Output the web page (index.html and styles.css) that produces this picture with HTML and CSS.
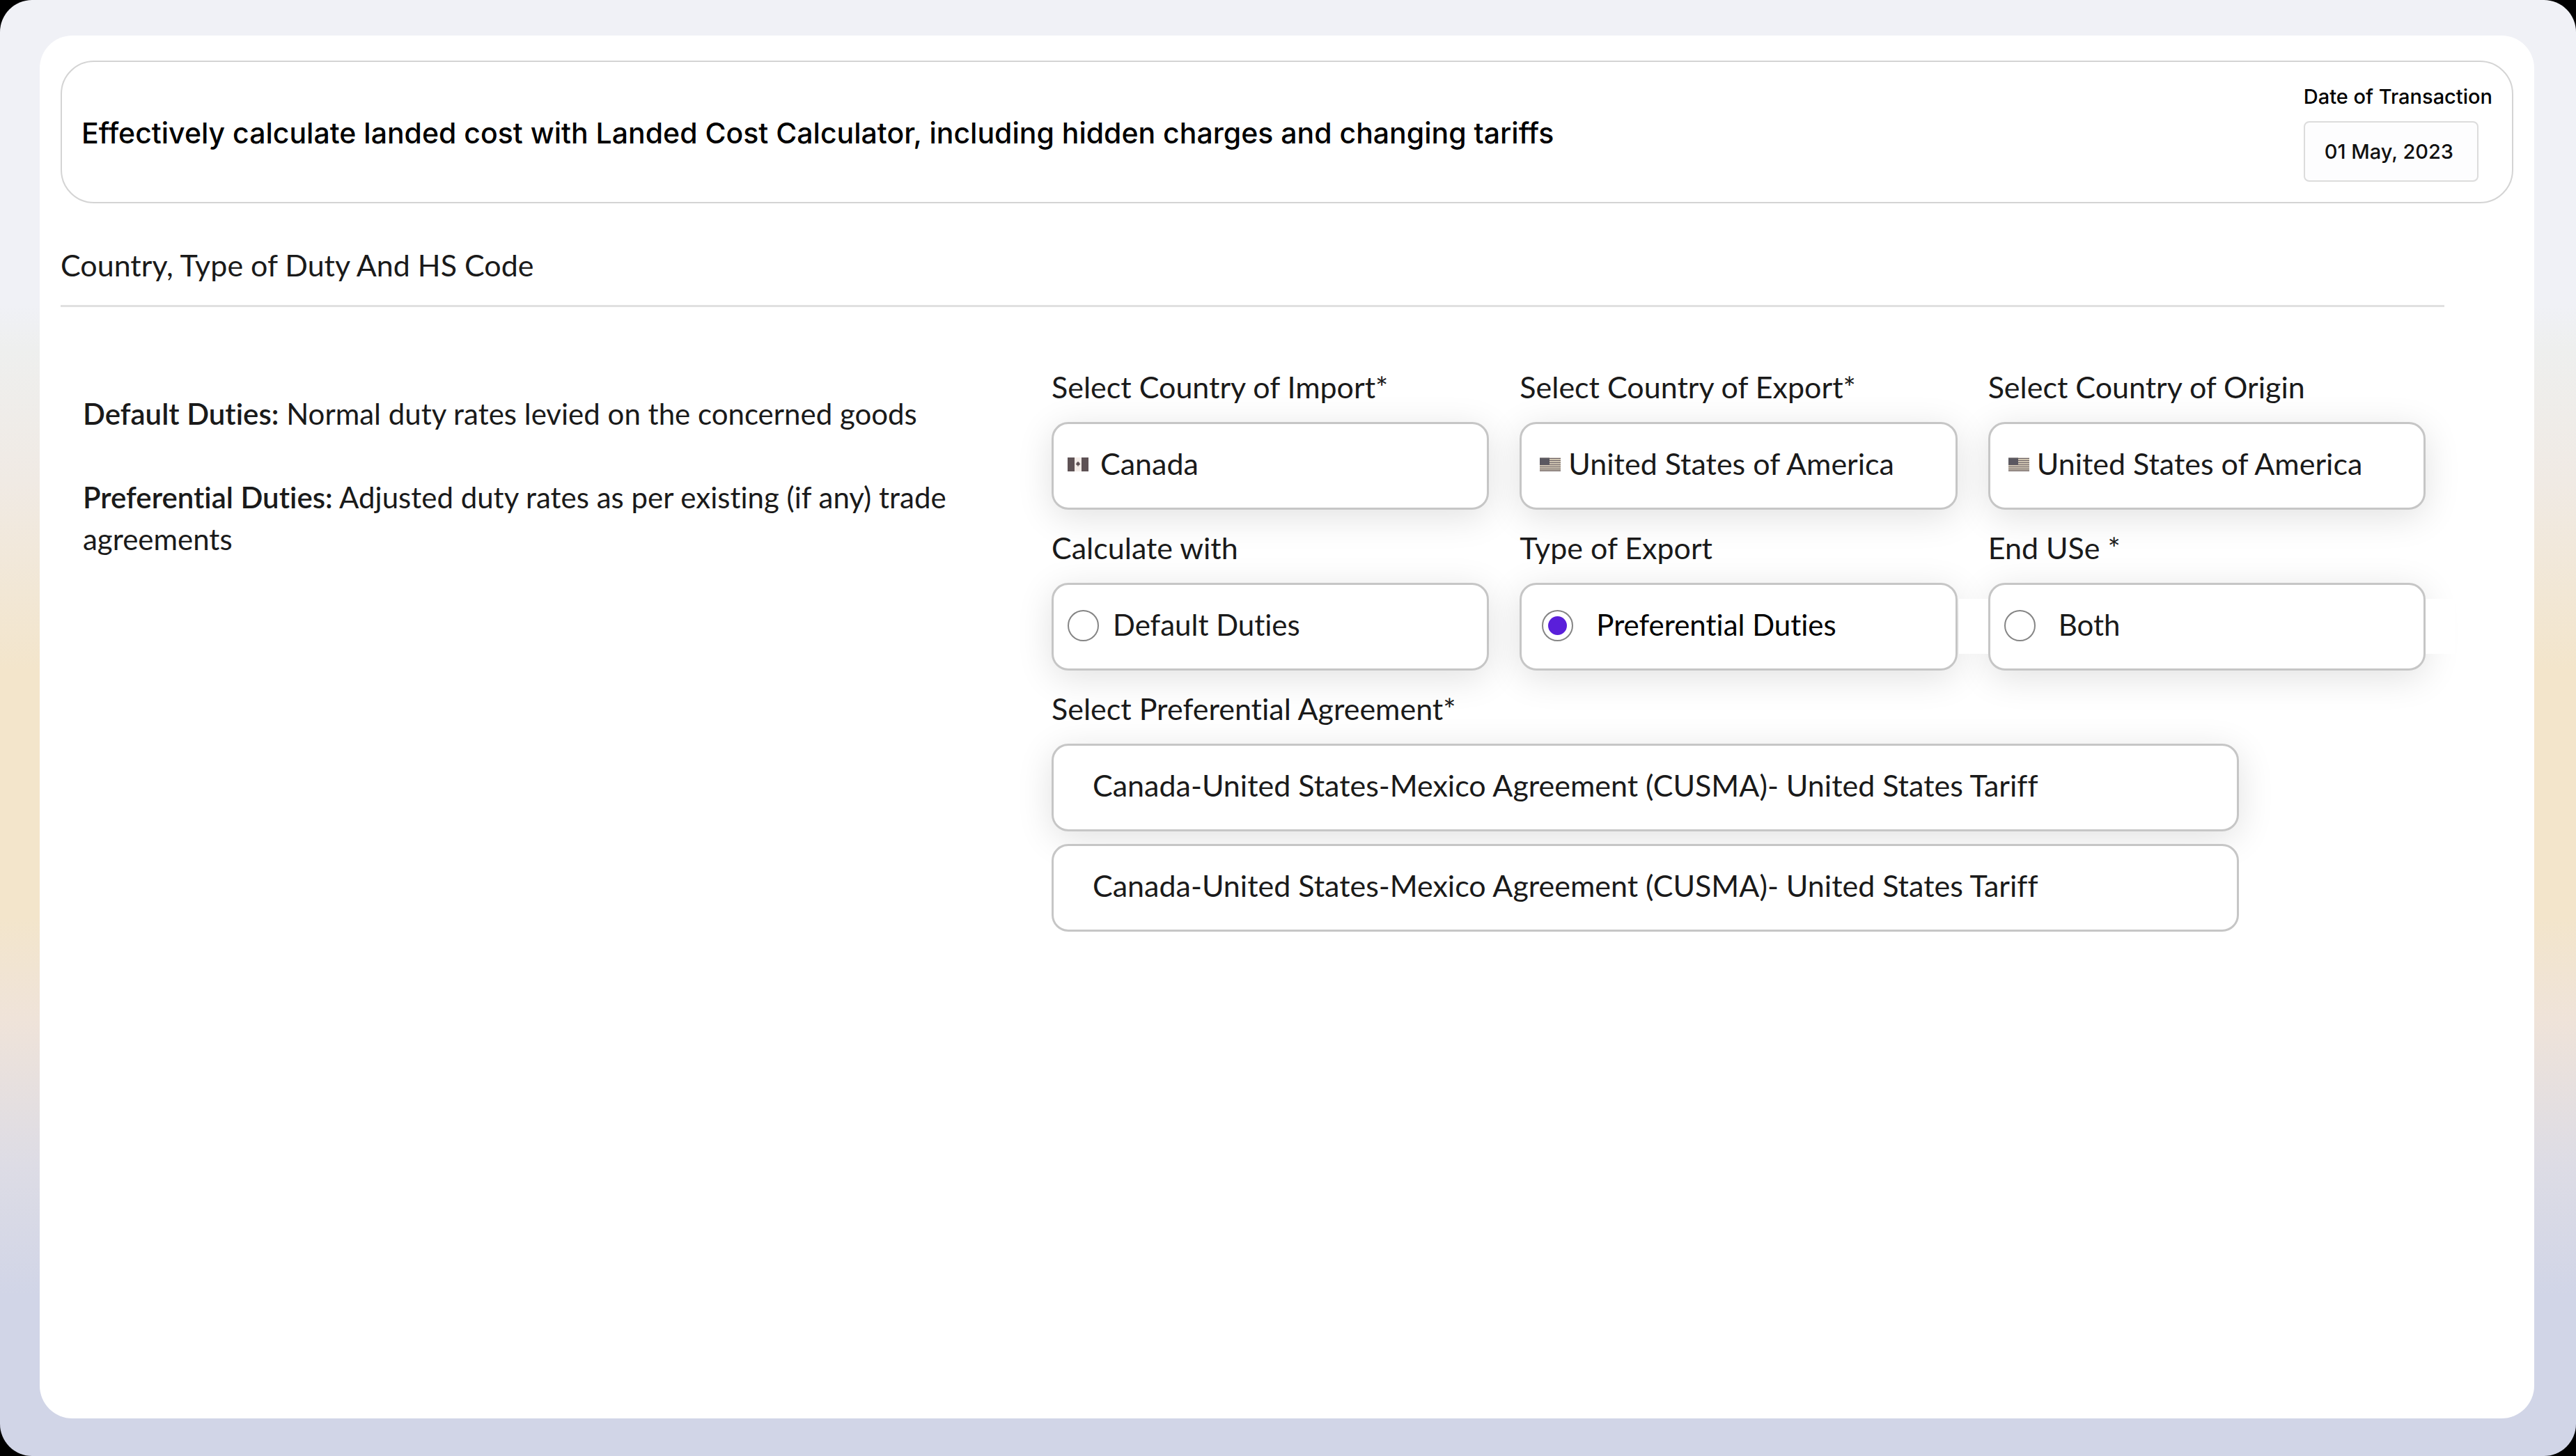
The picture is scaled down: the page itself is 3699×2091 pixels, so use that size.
FILE: index.html
```html
<!DOCTYPE html>
<html lang="en">
<head>
<meta charset="utf-8">
<meta name="viewport" content="width=device-width, initial-scale=1">
<title>Landed Cost Calculator</title>
<link rel="stylesheet" href="styles.css">
</head>
<body>
<svg class="sprite" aria-hidden="true">
  <symbol id="flag-ca" viewBox="0 0 30 20">
    <rect width="30" height="20" fill="#f3ece8"/>
    <rect width="10" height="20" fill="#5e5255"/>
    <rect x="20" width="10" height="20" fill="#5e5255"/>
    <path d="M15 5.5l1.2 1.8 1-.4-.2 1.500 1.400.7-1.800 2.200-1.200.2v1.500h-.8v-1.500l-1.200-.2-1.800-2.200 1.400-.7-.2-1.500 1 .4z" fill="#5e5255"/>
  </symbol>
  <symbol id="flag-us" viewBox="0 0 30 19">
    <rect width="30" height="19" fill="#f1e4cb"/>
    <path d="M0 1h30M0 4h30M0 7h30M0 10h30M0 13h30M0 16h30M0 18.500h30" stroke="#6d6366" stroke-width="1.300"/>
    <rect width="14" height="10" fill="#5b5860"/>
  </symbol>
</svg>
<div class="page">
  <main class="card">
    <header class="banner">
      <h1 class="banner-title">Effectively calculate landed cost with Landed Cost Calculator, including hidden charges and changing tariffs</h1>
      <div class="date">
        <label class="date-label" for="date">Date of Transaction</label>
        <input class="date-input" id="date" type="text" value="01 May, 2023">
      </div>
    </header>

    <section class="section">
      <h2 class="section-title">Country, Type of Duty And HS Code</h2>
      <div class="section-body">
        <div class="notes">
          <p><strong>Default Duties:</strong> Normal duty rates levied on the concerned goods</p>
          <p><strong>Preferential Duties:</strong> Adjusted duty rates as per existing (if any) trade agreements</p>
        </div>

        <form class="form">
          <div class="field">
            <label class="label" for="import">Select Country of Import*</label>
            <div class="box">
              <span class="flag-slot"><svg class="flag"><use href="#flag-ca"/></svg></span>
              <select class="select" id="import"><option>Canada</option></select>
            </div>
          </div>
          <div class="field">
            <label class="label" for="export">Select Country of Export*</label>
            <div class="box">
              <span class="flag-slot flag-slot-end"><svg class="flag"><use href="#flag-us"/></svg></span>
              <select class="select" id="export"><option>United States of America</option></select>
            </div>
          </div>
          <div class="field">
            <label class="label" for="origin">Select Country of Origin</label>
            <div class="box">
              <span class="flag-slot flag-slot-end"><svg class="flag"><use href="#flag-us"/></svg></span>
              <select class="select" id="origin"><option>United States of America</option></select>
            </div>
          </div>

          <div class="field">
            <span class="label">Calculate with</span>
            <label class="box option">
              <input class="radio" type="radio" name="duty">
              <span class="option-text">Default Duties</span>
            </label>
          </div>
          <div class="field">
            <span class="label">Type of Export</span>
            <label class="box option option-wide option-selected">
              <input class="radio" type="radio" name="duty" checked>
              <span class="option-text">Preferential Duties</span>
            </label>
          </div>
          <div class="field">
            <span class="label">End USe *</span>
            <label class="box option option-wide option-last">
              <input class="radio" type="radio" name="duty">
              <span class="option-text">Both</span>
            </label>
          </div>

          <div class="field field-agreement">
            <label class="label" for="agreement">Select Preferential Agreement*</label>
            <div class="agreements">
              <div class="box box-text">
                <select class="select" id="agreement"><option>Canada-United States-Mexico Agreement (CUSMA)- United States Tariff</option></select>
              </div>
              <div class="box box-text box-flat">
                <select class="select" aria-label="Second preferential agreement"><option>Canada-United States-Mexico Agreement (CUSMA)- United States Tariff</option></select>
              </div>
            </div>
          </div>
        </form>
      </div>
    </section>
  </main>
</div>
</body>
</html>
```
FILE: styles.css
```css
* {
  box-sizing: border-box;
}

body {
  margin: 0;
  background: #000;
  color: #1a1a1a;
  font-family: Lato, "Noto Sans", sans-serif;
  font-size: 43px;
  font-variant-ligatures: none;
  line-height: 52px;
}

h1,
h2,
p {
  margin: 0;
  font-weight: 400;
}

.sprite {
  position: absolute;
  width: 0;
  height: 0;
}

.page {
  display: flex;
  min-height: 100vh;
  padding: 51px 60px 54px 57px;
  border-radius: 46px;
  background: linear-gradient(#f0f1f6 0%, #f0f1f6 21%, #eeefee 24%, #f0eae4 33%, #f3e5cb 46%, #f3e5cb 63%, #efe3d9 70%, #dddce5 80%, #d1d5e7 89%, #d1d5e7 100%);
}

.card {
  flex: 1;
  padding: 36px 30px;
  border-radius: 47px;
  background: #fff;
}

/* Banner */

.banner {
  display: flex;
  align-items: center;
  justify-content: space-between;
  gap: 40px;
  padding: 32px 28px 29px;
  border: 2px solid #d4d4d4;
  border-radius: 48px;
  color: #000;
  font-family: Inter, sans-serif;
}

.banner-title {
  font-size: 41px;
  font-weight: 500;
}

.date {
  display: flex;
  flex-direction: column;
  align-items: flex-start;
  gap: 17px;
  font-size: 29px;
  font-weight: 500;
}

.date-label {
  line-height: 36px;
}

.date-input {
  width: 251px;
  height: 87px;
  padding: 0 28px;
  border: 2px solid #dcdcdc;
  border-radius: 8px;
  background: #fdfdfe;
  color: #111;
  font: inherit;
}

/* Section */

.section {
  margin: 63px 99px 0 0;
}

.section-title {
  padding-bottom: 31px;
  border-bottom: 3px solid #e0e0e0;
  font-size: 43px;
}

.section-body {
  display: grid;
  grid-template-columns: 1423fr 1973fr;
  padding: 89px 27px 0 0;
}

.notes {
  display: flex;
  flex-direction: column;
  gap: 60px;
  padding: 34px 100px 0 32px;
  font-size: 42px;
  line-height: 60px;
}

.notes strong {
  font-weight: 600;
}

/* Form */

.form {
  display: grid;
  grid-template-columns: repeat(3, 1fr);
  gap: 29px 44px;
  align-content: start;
}

.field {
  display: flex;
  flex-direction: column;
  gap: 24px;
}

.field-agreement {
  grid-column: 1 / -1;
  padding-right: 268px;
}

.agreements {
  display: flex;
  flex-direction: column;
  gap: 18px;
}

.box {
  display: flex;
  align-items: center;
  height: 126px;
  padding: 0 20px 4px;
  border: 3px solid #c6c6c6;
  border-radius: 24px;
  background: #fff;
  box-shadow: 0 10px 52px rgba(0, 0, 0, 0.12);
}

.box-text {
  padding-left: 56px;
}

.box-flat {
  box-shadow: none;
}

.select,
.option-text {
  padding: 0 0 2px;
  border: 0;
  background: none;
  color: inherit;
  font: inherit;
}

.select {
  flex: 1;
  min-width: 0;
  appearance: none;
}

.flag-slot {
  display: flex;
  width: 36px;
  margin-right: 11px;
}

.flag-slot-end {
  justify-content: flex-end;
}

.flag {
  width: 30px;
  height: 20px;
}

/* Duty options */

.option {
  gap: 20px;
  font-size: 42px;
}

.option-wide {
  gap: 33px;
}

.option-selected {
  padding-left: 29px;
  color: #000;
}

.option-last {
  position: relative;
}

/* Clear strips that cut the shadow on both sides of the last option */
.option-last::before,
.option-last::after {
  content: "";
  position: absolute;
  top: 20px;
  height: 79px;
  background: #fff;
}

.option-last::before {
  left: -45px;
  width: 42px;
}

.option-last::after {
  right: -45px;
  width: 42px;
}

.radio {
  display: grid;
  place-content: center;
  width: 45px;
  height: 45px;
  margin: 0;
  border: 2px solid #858585;
  border-radius: 50%;
  appearance: none;
}

.radio:checked::before {
  content: "";
  width: 27px;
  height: 27px;
  border-radius: 50%;
  background: #5a1fda;
}
```
